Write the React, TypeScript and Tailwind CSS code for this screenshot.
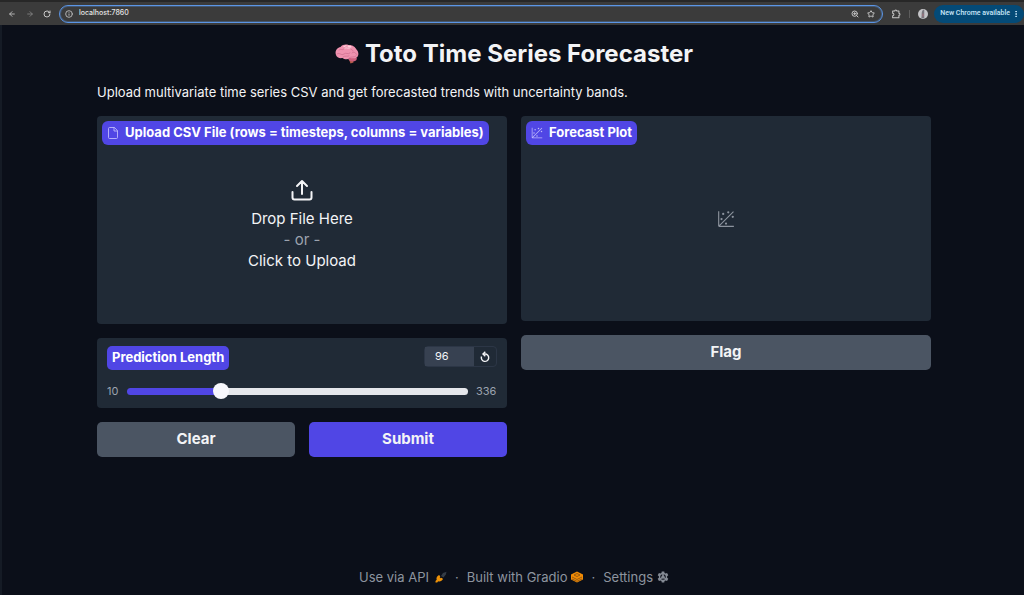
import { useState } from 'react';
import type { ReactNode } from 'react';
import { ArrowLeft, ArrowRight, EllipsisVertical, Info, RotateCw, Star, ZoomIn } from 'lucide-react';

const MIN_LENGTH = 10;
const MAX_LENGTH = 336;
const DEFAULT_LENGTH = 96;

function BrainIcon() {
  return (
    <svg viewBox="0 0 24 20" className="h-5 w-6 shrink-0" aria-hidden="true">
      <path d="M14 15.500L15.500 19.500L18.500 18.500L18 14Z" fill="#b65c49" />
      <path d="M13 14.500C14 17.500 18 18.500 21 16.500C22.500 15 22 13 20 12.500Z" fill="#cd5f7d" />
      <path
        d="M1 11C-.5 7.500 2 3.500 5.500 3C7.500.500 11 0 13.500 1C17 .500 20.500 3 21.500 5.500C24 8 24 12 21.500 13.500C19 15 16 14 14.500 14C12 16.500 9 15 7.500 14C4.500 14.500 1.500 13.500 1 11Z"
        fill="#f092af"
      />
      <path
        d="M4 6C6 4 7 7 9 5M10 2.500C9 5 13 5 13 3M15 3C14 6 18 5 18 7M2 10C5 8 6 12 9 10C11 8 13 11 15 9M17 9C19 7 21 9 22 11M8 13C10 11 13 13 14 12M14 14C16 12 19 14 21 12"
        fill="none"
        stroke="#cf6c8c"
        strokeWidth="0.700"
        strokeLinecap="round"
      />
      <path d="M9 2.500L11 1.800M13 2.200L16 2.800M10 4L15 4" stroke="#ffd5df" strokeWidth="1.200" strokeLinecap="round" />
    </svg>
  );
}

function FileIcon() {
  return (
    <svg viewBox="0 0 24 24" className="size-3" fill="none" stroke="currentColor" strokeWidth="1.8" strokeLinecap="round" strokeLinejoin="round" aria-hidden="true">
      <path d="M14 1H5a2 2 0 0 0-2 2v18a2 2 0 0 0 2 2h14a2 2 0 0 0 2-2V8Z" />
      <path d="M14 1v7h7" />
    </svg>
  );
}

function PlotIcon({ className }: { className: string }) {
  return (
    <svg viewBox="0 0 32 32" className={className} fill="currentColor" aria-hidden="true">
      <circle cx="20" cy="4" r="2" />
      <circle cx="8" cy="16" r="2" />
      <circle cx="28" cy="12" r="2" />
      <circle cx="11" cy="7" r="2" />
      <circle cx="16" cy="24" r="2" />
      <path d="M30 3.410L28.590 2L4 26.590V2H2V28a2 2 0 0 0 2 2H30V28H5.410Z" />
    </svg>
  );
}

function UploadIcon() {
  return (
    <svg viewBox="0 0 24 24" className="h-6 w-6" fill="none" stroke="currentColor" strokeWidth="2" strokeLinecap="round" strokeLinejoin="round" aria-hidden="true">
      <path d="M2.500 14v5.500a2 2 0 0 0 2 2h15a2 2 0 0 0 2-2V14M12 16V3M7 8l5-5 5 5" />
    </svg>
  );
}

function ResetIcon() {
  return (
    <svg viewBox="0 0 12 12" className="size-3" fill="none" stroke="currentColor" strokeWidth="1.400" aria-hidden="true">
      <path d="M2.500 5.500A3.700 3.700 0 1 0 6 3H4" />
      <path d="M6.300 .800L4 3L6.300 5.200" />
    </svg>
  );
}

function PlugIcon() {
  return (
    <svg viewBox="0 0 12 12" className="size-3" aria-hidden="true">
      <path d="M6 5L8 2L11.500 .800L10.800 3.500L8.500 6.500Z" fill="#343c46" />
      <path d="M4 4L5.300 5.300L4.700 6.300L5.700 7.300L6.700 6.700L8 8C7 10 5 11 3.200 10.300L2.200 11.500H.500V10L1.700 8.800C1 7 2 5 4 4Z" fill="#ee9208" />
    </svg>
  );
}

function GradioIcon() {
  return (
    <svg viewBox="0 0 12 12" className="size-3" aria-hidden="true">
      <path d="M6 .500L12 3.500V8.500L6 11.500L0 8.500V3.500Z" fill="#f28c05" />
      <path d="M3 4L6 2.500L9 4L6 5.500ZM1 6L6 8.500L11 6M1 8L6 10.300L11 8" fill="none" stroke="#784812" strokeWidth="0.700" />
    </svg>
  );
}

function GearIcon() {
  return (
    <svg viewBox="0 0 24 24" className="size-3" aria-hidden="true">
      <path
        fill="#858b95"
        fillRule="evenodd"
        d="M9.500 1h5l.6 3 2 1.100 3-1.100 2.500 4.300-2.400 2.100v3.200l2.400 2.100-2.500 4.300-3-1-2 1.100-.6 2.900h-5l-.6-2.900-2-1.100-3 1-2.500-4.300 2.400-2.100v-3.200L1.400 8.300 3.900 4l3 1.100 2-1.100ZM12 6.500a5.500 5.500 0 1 0 0 11 5.500 5.500 0 0 0 0-11Z"
      />
      <path d="M12 5v7l-6 4m6-4 6 4" stroke="#858b95" strokeWidth="3" fill="none" />
      <circle cx="12" cy="12" r="3.500" fill="#858b95" />
    </svg>
  );
}

function ExtensionsIcon() {
  return (
    <svg viewBox="0 0 24 24" className="size-2.5" fill="none" stroke="currentColor" strokeWidth="2.500" strokeLinejoin="round" aria-hidden="true">
      <path d="M4 5h5a2.500 2.500 0 0 1 5 0h5v5a2.500 2.500 0 0 1 0 5v6H4v-5a3 3 0 0 0 0-6Z" />
    </svg>
  );
}

function BrowserBar() {
  return (
    <header className="flex h-[25px] items-center border-t-2 border-[#272727] bg-[#3b3b3b] text-[#c7c7c7]">
      <nav className="flex w-[59px] shrink-0 items-center justify-between px-2" aria-label="Browser">
        <button type="button" aria-label="Back"><ArrowLeft className="size-2" strokeWidth={2.5} /></button>
        <button type="button" aria-label="Forward" className="text-[#858585]"><ArrowRight className="size-2" strokeWidth={2.5} /></button>
        <button type="button" aria-label="Reload"><RotateCw className="size-2" strokeWidth={3} /></button>
      </nav>
      <div className="flex h-[18px] flex-1 items-center rounded-full border-[1px] border-[#5b95e5] px-[5px] ring-1 ring-[#5b95e5]/30 ring-inset">
        <Info className="size-2" strokeWidth={2.5} />
        <input
          aria-label="Address"
          defaultValue="localhost:7860"
          className="ml-1.5 min-w-0 flex-1 bg-transparent font-['Inter','Liberation_Sans',sans-serif] text-[7px] font-medium text-[#e4e4e4] outline-none"
        />
        <button type="button" aria-label="Zoom" className="mr-2"><ZoomIn className="size-2" strokeWidth={3} /></button>
        <button type="button" aria-label="Bookmark" className="mr-0.5"><Star className="size-2" strokeWidth={3} /></button>
      </div>
      <button type="button" aria-label="Extensions" className="ml-2"><ExtensionsIcon /></button>
      <span className="mx-2 h-2 w-px bg-[#5d5d5d]" />
      <button type="button" aria-label="Profile">
        <svg viewBox="0 0 12 12" className="size-2.5">
          <circle cx="6" cy="6" r="6" fill="#c5c5c8" />
          <path d="M6 1C3.500 4 5 7 4 11H7.500V1Z" fill="#77767d" />
          <path d="M6 5.500V9" stroke="#b66c7b" />
        </svg>
      </button>
      <button type="button" className="ml-1.5 flex h-[18px] items-center gap-0.5 rounded-full bg-[#044a77] pr-1 pl-1.5 font-['Roboto','Liberation_Sans',sans-serif] text-[7px] font-medium whitespace-nowrap text-[#c9e6f9]">
        New Chrome available
        <EllipsisVertical className="size-2" strokeWidth={3} />
      </button>
    </header>
  );
}

function BlockLabel({ icon, children }: { icon: ReactNode; children: ReactNode }) {
  return (
    <h2 className="flex h-6 w-fit items-center gap-1.5 rounded-md bg-[#5046e5] px-[5px] text-[13px] font-bold whitespace-nowrap text-white">
      <span className="text-[#bdb9fa]">{icon}</span>
      {children}
    </h2>
  );
}

export default function App() {
  const [length, setLength] = useState(DEFAULT_LENGTH);
  const percent = ((length - MIN_LENGTH) / (MAX_LENGTH - MIN_LENGTH)) * 100;

  return (
    <div className="flex min-h-screen flex-col bg-[#0b0f19] font-['Inter','Liberation_Sans',sans-serif] text-[#f3f4f6]">
      <BrowserBar />
      <div className="flex flex-1 flex-col border-l-2 border-[#151b25] pr-[93px] pl-[95px]">
        <main className="flex-1">
          <h1 className="mt-[13px] flex h-8 items-center justify-center gap-1.5 text-2xl font-bold whitespace-nowrap">
            <BrainIcon />
            Toto Time Series Forecaster
          </h1>
          <p className="mt-3 text-[13px] leading-5">
            Upload multivariate time series CSV and get forecasted trends with uncertainty bands.
          </p>

          <div className="mt-3.5 grid grid-cols-2 items-start gap-3.5">
            <section className="grid gap-3.5">
              <div className="flex h-52 flex-col rounded-sm bg-[#202a36] p-[5px]">
                <BlockLabel icon={<FileIcon />}>Upload CSV File (rows = timesteps, columns = variables)</BlockLabel>
                <button type="button" className="flex flex-1 flex-col items-center pt-[33px] text-[15px] leading-[21px]">
                  <UploadIcon />
                  <span className="mt-1.5">Drop File Here</span>
                  <span className="text-[#9ca3af]">- or -</span>
                  <span>Click to Upload</span>
                </button>
              </div>

              <div className="h-[70px] rounded-sm bg-[#202a36] px-2.5 py-2">
                <div className="flex items-start justify-between">
                  <label htmlFor="prediction-length" className="flex h-6 items-center rounded-[5px] bg-[#5046e5] px-[5px] text-[13px] font-bold text-white">
                    Prediction Length
                  </label>
                  <div className="flex h-[21px] rounded-sm border border-[#2c3646]">
                    <input
                      type="number"
                      aria-label="Prediction length value"
                      min={MIN_LENGTH}
                      max={MAX_LENGTH}
                      value={length}
                      onChange={(event) => setLength(Number(event.target.value))}
                      className="w-[49px] appearance-none bg-[#374151] pl-2.5 text-[11px] outline-none"
                    />
                    <button type="button" aria-label="Reset" onClick={() => setLength(DEFAULT_LENGTH)} className="flex w-[22px] items-center justify-center">
                      <ResetIcon />
                    </button>
                  </div>
                </div>
                <div className="mt-[13px] flex h-4 items-center gap-2 text-[11px] text-[#9ca3af]">
                  <span className="w-3">{MIN_LENGTH}</span>
                  <input
                    id="prediction-length"
                    type="range"
                    min={MIN_LENGTH}
                    max={MAX_LENGTH}
                    value={length}
                    onChange={(event) => setLength(Number(event.target.value))}
                    className="h-[7px] min-w-0 flex-1 appearance-none rounded-full [&::-webkit-slider-thumb]:size-4 [&::-webkit-slider-thumb]:appearance-none [&::-webkit-slider-thumb]:rounded-full [&::-webkit-slider-thumb]:bg-[#f7f7fc]"
                    style={{ background: `linear-gradient(to right, #5046e5 ${percent}%, #e5e7eb ${percent}%)` }}
                  />
                  <span className="w-[21px]">{MAX_LENGTH}</span>
                </div>
              </div>

              <div className="grid grid-cols-2 gap-3.5 text-[15px] font-bold">
                <button type="button" className="h-[35px] rounded-[5px] bg-[#4b5563]">Clear</button>
                <button type="button" className="h-[35px] rounded-[5px] bg-[#5046e5]">Submit</button>
              </div>
            </section>

            <section className="grid gap-3.5">
              <div className="flex h-[205px] flex-col rounded-sm bg-[#202a36] p-[5px]">
                <BlockLabel icon={<PlotIcon className="size-3" />}>Forecast Plot</BlockLabel>
                <div className="flex flex-1 items-center justify-center pb-6 text-[#8c939e]">
                  <PlotIcon className="size-[18px]" />
                </div>
              </div>
              <button type="button" className="h-[35px] rounded-[5px] bg-[#4b5563] text-[15px] font-bold">Flag</button>
            </section>
          </div>
        </main>

        <footer className="flex items-center justify-center gap-2 pb-2 text-[13px] leading-5 whitespace-nowrap text-[#8d949f]">
          <a href="#api" className="flex items-center gap-1.5">Use via API <PlugIcon /></a>
          <span>·</span>
          <a href="#gradio" className="flex items-center gap-1">Built with Gradio <GradioIcon /></a>
          <span>·</span>
          <a href="#settings" className="flex items-center gap-1">Settings <GearIcon /></a>
        </footer>
      </div>
    </div>
  );
}
